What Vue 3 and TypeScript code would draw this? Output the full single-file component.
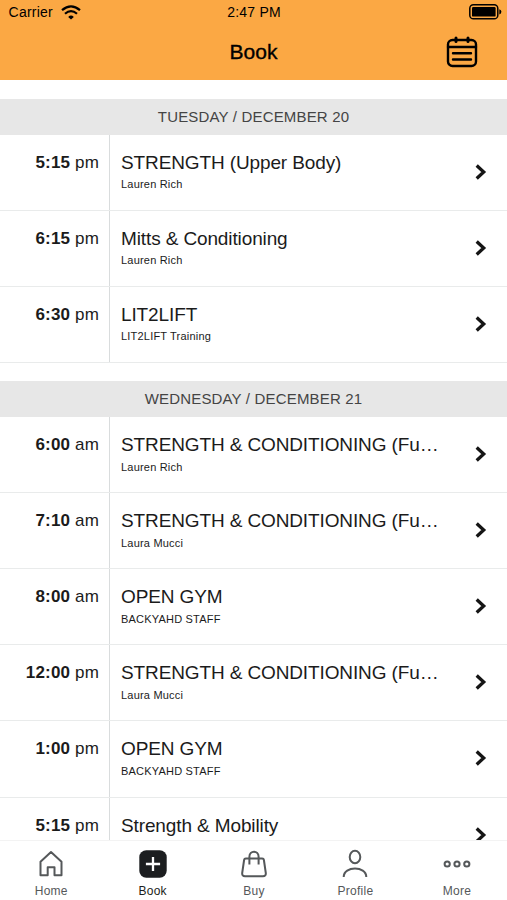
<script setup lang="ts">
interface ClassEntry {
  time: string
  period: 'am' | 'pm'
  title: string
  staff: string
}

interface Day {
  label: string
  classes: ClassEntry[]
}

const conditioning = 'STRENGTH & CONDITIONING (Fu…'

const days: Day[] = [
  {
    label: 'TUESDAY / DECEMBER 20',
    classes: [
      { time: '5:15', period: 'pm', title: 'STRENGTH (Upper Body)', staff: 'Lauren Rich' },
      { time: '6:15', period: 'pm', title: 'Mitts & Conditioning', staff: 'Lauren Rich' },
      { time: '6:30', period: 'pm', title: 'LIT2LIFT', staff: 'LIT2LIFT Training' },
    ],
  },
  {
    label: 'WEDNESDAY / DECEMBER 21',
    classes: [
      { time: '6:00', period: 'am', title: conditioning, staff: 'Lauren Rich' },
      { time: '7:10', period: 'am', title: conditioning, staff: 'Laura Mucci' },
      { time: '8:00', period: 'am', title: 'OPEN GYM', staff: 'BACKYAHD STAFF' },
      { time: '12:00', period: 'pm', title: conditioning, staff: 'Laura Mucci' },
      { time: '1:00', period: 'pm', title: 'OPEN GYM', staff: 'BACKYAHD STAFF' },
      { time: '5:15', period: 'pm', title: 'Strength & Mobility', staff: '' },
    ],
  },
]

const tabs = ['Home', 'Book', 'Buy', 'Profile', 'More']
const activeTab = 'Book'
</script>

<template>
  <div class="screen">
    <header class="top">
      <div class="status">
        <div class="carrier">
          <span>Carrier</span>
          <svg class="wifi" width="20" height="15" viewBox="0 0 20 15" fill="none" stroke="#000" stroke-width="2.2">
            <path d="M1 5.2Q10-2.6 19 5.2M4 8.8Q10 3.4 16 8.8" />
            <path d="M10 14.6L7.2 11.9Q10 9.2 12.8 11.9Z" fill="#000" stroke="none" />
          </svg>
        </div>
        <span class="clock">2:47 PM</span>
        <svg class="battery" width="33" height="16" viewBox="0 0 33 16">
          <rect x="0.8" y="0.8" width="28" height="14" rx="3.6" fill="none" stroke="#000" stroke-width="1.5" />
          <rect x="3" y="3" width="23.6" height="9.6" rx="1.2" />
          <path d="M30.3 5.2Q32.4 5.8 32.4 7.8T30.3 10.4Z" />
        </svg>
      </div>
      <div class="nav">
        <h1>Book</h1>
        <svg class="calendar" width="32" height="32" viewBox="0 0 32 32" fill="none" stroke="#000" stroke-width="2.4" stroke-linecap="round">
          <rect x="2" y="4" width="28" height="26" rx="4.5" />
          <path d="M2 11H30M7 17.3H25M7 23.5H25" />
          <path d="M10 2V5.6M22 2V5.6" stroke-width="3" />
        </svg>
      </div>
    </header>

    <main class="schedule">
      <section v-for="day in days" :key="day.label" class="day">
        <h2>{{ day.label }}</h2>
        <article v-for="entry in day.classes" :key="entry.time" class="row">
          <div class="time"><b>{{ entry.time }}</b> {{ entry.period }}</div>
          <div class="info">
            <div class="title">{{ entry.title }}</div>
            <div class="staff">{{ entry.staff }}</div>
          </div>
          <svg class="chevron" width="12" height="16" viewBox="0 0 12 16" fill="none" stroke="#151515" stroke-width="3.3">
            <path d="M1.7 1.5L8.7 8L1.7 14.5" />
          </svg>
        </article>
      </section>
    </main>

    <nav class="tabs">
      <div v-for="tab in tabs" :key="tab" class="tab" :class="{ active: tab === activeTab }">
        <svg width="30" height="30" viewBox="0 0 30 30" fill="none" stroke="#55585a" stroke-width="2" stroke-linejoin="round">
          <path v-if="tab === 'Home'" d="M4.5 12.7L15 3L25.5 12.7V26.3H18.5V18.3H11.7V26.3H4.5Z" />
          <template v-else-if="tab === 'Book'">
            <rect x="1.3" y="1.3" width="27.4" height="27.4" rx="7" fill="#1c1e20" stroke="none" />
            <path d="M15 7.9V22.1M7.9 15H22.1" stroke="#fff" stroke-width="2.3" />
          </template>
          <template v-else-if="tab === 'Buy'">
            <path d="M6.8 9.6H23.2Q24.7 9.6 24.9 11L26.8 24Q27.1 27.3 24 27.3H6Q2.9 27.3 3.2 24L5.1 11Q5.3 9.6 6.8 9.6Z" />
            <path d="M10.4 15.4V7.8C10.4 1 19.6 1 19.6 7.8V15.4" />
          </template>
          <template v-else-if="tab === 'Profile'">
            <ellipse cx="15" cy="8" rx="5.3" ry="6.2" />
            <path d="M3.7 28C3.7 16.7 26.3 16.7 26.3 28" />
          </template>
          <template v-else>
            <circle cx="5.2" cy="15" r="2.6" />
            <circle cx="15" cy="15" r="2.6" />
            <circle cx="24.8" cy="15" r="2.6" />
          </template>
        </svg>
        <span>{{ tab }}</span>
      </div>
    </nav>
  </div>
</template>

<style scoped>
.screen {
  display: flex;
  flex-direction: column;
  width: 507px;
  height: 900px;
  overflow: hidden;
  background: #fff;
  color: #1b1b1b;
  font-family: "Liberation Sans", Arial, sans-serif;
}

.top {
  flex: none;
  height: 80px;
  background: #fba844;
  color: #000;
}

.status {
  display: grid;
  grid-template-columns: 1fr auto 1fr;
  align-items: center;
  height: 24px;
  padding: 0 5px 0 8px;
  font-size: 14px;
  letter-spacing: 0.22px;
}

.carrier {
  display: flex;
  align-items: center;
  gap: 8px;
  padding-left: 0.6px;
}

.clock {
  margin-left: -2px;
}

.battery {
  justify-self: end;
}

.nav {
  display: grid;
  grid-template-columns: 1fr auto 1fr;
  align-items: center;
  height: 56px;
  padding-right: 29px;
  padding-left: 29px;
}

h1 {
  grid-column: 2;
  margin: 0;
  font-size: 21px;
  font-weight: 400;
  -webkit-text-stroke: 0.35px #000;
}

.calendar {
  justify-self: end;
}

.schedule {
  flex: 1;
  min-height: 0;
  overflow: hidden;
}

.day {
  padding-top: 18.6px;
}

.day + .day {
  padding-top: 18px;
}

h2 {
  height: 36px;
  margin: 0;
  background: #e7e7e7;
  color: #444;
  font-size: 15px;
  font-weight: 400;
  line-height: 36px;
  text-align: center;
  letter-spacing: 0.17px;
}

.row {
  display: flex;
  box-sizing: border-box;
  height: 76.14px;
  border-bottom: 1px solid #e9ebeb;
}

.time {
  flex: none;
  box-sizing: border-box;
  width: 110px;
  padding: 17px 10px 0 0;
  border-right: 1px solid #d9dcdd;
  font-size: 17px;
  line-height: 22px;
  text-align: right;
  letter-spacing: 0.17px;
}

.info {
  flex: none;
  width: 318px;
  padding: 16px 0 0 11px;
}

.title {
  font-size: 19px;
  line-height: 24px;
  white-space: nowrap;
  letter-spacing: -0.12px;
}

.staff {
  margin-top: 2.6px;
  font-size: 11px;
  line-height: 14px;
  letter-spacing: 0.2px;
}

.chevron {
  margin: 29px 0 0 35.6px;
}

.tabs {
  display: grid;
  flex: none;
  grid-template-columns: repeat(5, 1fr);
  height: 60px;
  border-top: 1px solid #f3f3f3;
  box-sizing: border-box;
  background: #fff;
}

.tab {
  display: flex;
  flex-direction: column;
  align-items: center;
  padding: 8px 0 0 1.2px;
  color: #55585a;
  font-size: 12px;
  line-height: 14px;
  letter-spacing: 0.25px;
}

.tab span {
  margin-top: 5px;
}

.active {
  color: #1c1e20;
}
</style>
